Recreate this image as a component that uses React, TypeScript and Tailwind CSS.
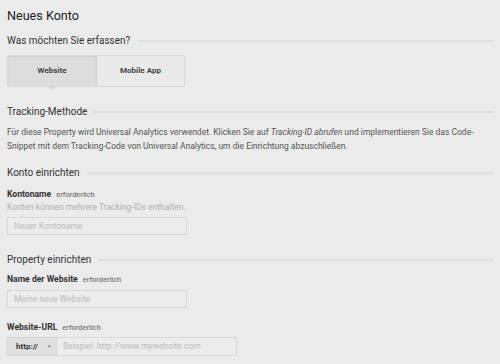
import React from "react";

function SectionHeader({ title, className = "" }: { title: string; className?: string }) {
  return (
    <div className={`flex items-center gap-[7px] ${className}`}>
      <span className="text-[10px] leading-[14px] text-[#333] whitespace-nowrap">{title}</span>
      <div className="flex-1 h-[2px] bg-[#dfdfdf]" />
    </div>
  );
}

function Label({ name, className = "" }: { name: string; className?: string }) {
  return (
    <div className={`flex items-baseline gap-[5px] leading-[12px] ${className}`}>
      <span className="text-[8.6px] font-bold text-[#333]">{name}</span>
      <span className="text-[7.4px] font-medium text-[#777]">erforderlich</span>
    </div>
  );
}

export default function App() {
  return (
    <div
      className="w-[500px] h-[364px] overflow-hidden bg-[#ebebeb] px-[7px]"
      style={{ fontFamily: "Roboto, 'Liberation Sans', sans-serif" }}
    >
      <h1 className="pt-[8px] text-[12.6px] leading-[16px] text-[#222]">Neues Konto</h1>

      <SectionHeader title="Was möchten Sie erfassen?" className="mt-[10px]" />

      <div className="mt-[7px] flex w-[178px] h-[32px] border border-[#d8d8d8] rounded-[2px]">
        <div className="relative flex w-[89px] items-center justify-center bg-[#dddddd] border-r border-[#d2d2d2] shadow-[inset_0_1px_2px_rgba(0,0,0,0.08)]">
          <span className="text-[8px] font-bold text-[#444]">Website</span>
          <div className="absolute left-1/2 -translate-x-1/2 top-full w-0 h-0 border-l-[4px] border-r-[4px] border-t-[4px] border-l-transparent border-r-transparent border-t-[#d4d4d4]" />
        </div>
        <div className="flex flex-1 items-center justify-center bg-[#e9e9e9]">
          <span className="text-[8px] font-bold text-[#444]">Mobile App</span>
        </div>
      </div>

      <SectionHeader title="Tracking-Methode" className="mt-[18px]" />

      <p className="mt-[7px] text-[8.5px] leading-[13.5px] text-[#555] whitespace-nowrap">
        Für diese Property wird Universal Analytics verwendet. Klicken Sie auf{" "}
        <em className="italic">Tracking-ID abrufen</em> und implementieren Sie das Code-
        <br />
        Snippet mit dem Tracking-Code von Universal Analytics, um die Einrichtung abzuschließen.
      </p>

      <SectionHeader title="Konto einrichten" className="mt-[13px]" />

      <Label name="Kontoname" className="mt-[8px]" />
      <div className="text-[8.5px] leading-[12px] text-[#b0b0b0]">Konten können mehrere Tracking-IDs enthalten.</div>
      <div className="mt-[4px] flex items-center w-[180px] h-[18px] border border-[#d8d8d8] bg-[#ececec] px-[6px]">
        <span className="text-[8.5px] text-[#bbbbbb]">Neuer Kontoname</span>
      </div>

      <SectionHeader title="Property einrichten" className="mt-[18px]" />

      <Label name="Name der Website" className="mt-[6px]" />
      <div className="mt-[4px] flex items-center w-[180px] h-[18px] border border-[#d8d8d8] bg-[#ececec] px-[6px]">
        <span className="text-[8.5px] text-[#bbbbbb]">Meine neue Website</span>
      </div>

      <Label name="Website-URL" className="mt-[13px]" />
      <div className="mt-[3px] flex h-[19px] w-[230px]">
        <div className="flex items-center w-[50px] border border-[#d6d6d6] bg-[#e0e0e0] pl-[8px]">
          <span className="text-[8px] font-bold text-[#333]">http://</span>
          <span className="ml-[9px] text-[5px] text-[#888]">▼</span>
        </div>
        <div className="flex flex-1 items-center border border-l-0 border-[#d8d8d8] bg-[#ececec] px-[6px]">
          <span className="text-[8.5px] text-[#bbbbbb]">Beispiel: http://www.mywebsite.com</span>
        </div>
      </div>
    </div>
  );
}
